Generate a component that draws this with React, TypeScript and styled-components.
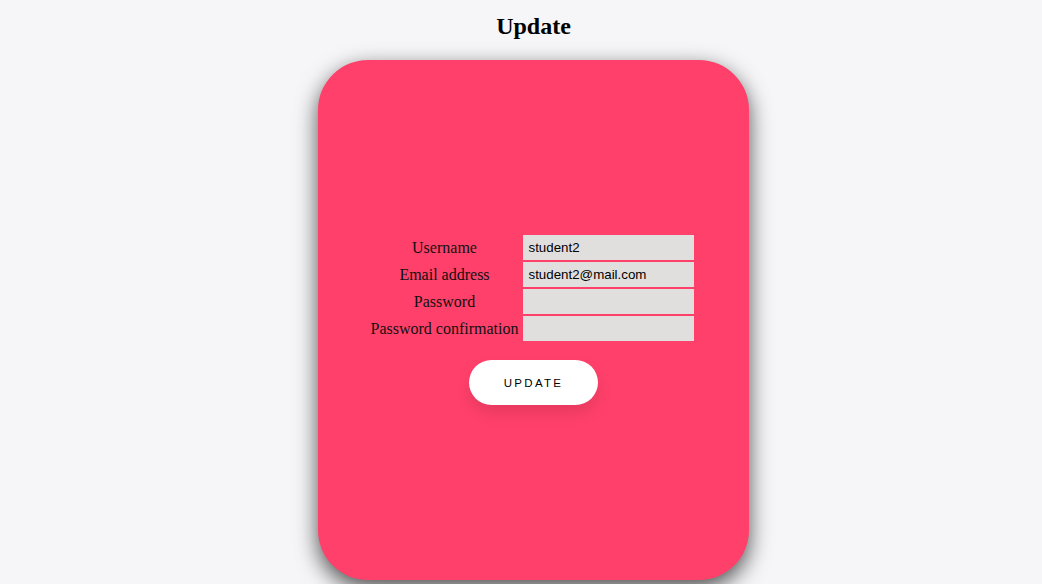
import React from "react";
import styled, { createGlobalStyle } from "styled-components";

const GlobalStyle = createGlobalStyle`
  html, body {
    margin: 0;
    background: #f6f5f7;
    font-family: "Liberation Serif", "Times New Roman", serif;
  }
`;

const Page = styled.div`
  display: flex;
  flex-direction: column;
  align-items: center;
  padding-left: 25px;
  min-height: 584px;
`;

const Title = styled.h2`
  font-size: 24px;
  font-weight: bold;
  margin: 13px 0 20px;
  color: #000;
`;

const Card = styled.div`
  width: 431px;
  height: 520px;
  flex-shrink: 0;
  background: #ff406a;
  border-radius: 50px;
  box-shadow: 0 8px 22px rgba(0, 0, 0, 0.68);
  display: flex;
  flex-direction: column;
  align-items: center;
  justify-content: center;
`;

const FormGrid = styled.div`
  display: grid;
  grid-template-columns: auto 171px;
  column-gap: 5px;
  row-gap: 2px;
  align-items: center;
  margin-right: 2px;
`;

const Label = styled.label`
  font-size: 16px;
  text-align: center;
  color: #111;
`;

const Field = styled.input`
  box-sizing: border-box;
  width: 171px;
  height: 25px;
  border: none;
  outline: none;
  padding: 0 5px;
  background: #e0dfde;
  font-family: "Liberation Sans", Arial, sans-serif;
  font-size: 13.33px;
  color: #000;
`;

const Button = styled.button`
  margin-top: 19px;
  width: 129px;
  height: 45px;
  border: none;
  border-radius: 45px;
  background: #fff;
  color: #000;
  font-family: "Liberation Sans", Arial, sans-serif;
  font-size: 11.5px;
  font-weight: 500;
  letter-spacing: 2.3px;
  text-transform: uppercase;
  box-shadow: 0 8px 15px rgba(0, 0, 0, 0.1);
  cursor: pointer;
`;

const fields = [
  { id: "username", label: "Username", type: "text", value: "student2" },
  { id: "email", label: "Email address", type: "email", value: "student2@mail.com" },
  { id: "password1", label: "Password", type: "password", value: "" },
  { id: "password2", label: "Password confirmation", type: "password", value: "" },
];

function App() {
  return (
    <>
      <GlobalStyle />
      <Page>
        <Title>Update</Title>
        <Card>
          <FormGrid>
            {fields.map((f) => (
              <React.Fragment key={f.id}>
                <Label htmlFor={f.id}>{f.label}</Label>
                <Field id={f.id} type={f.type} defaultValue={f.value} />
              </React.Fragment>
            ))}
          </FormGrid>
          <Button type="button">Update</Button>
        </Card>
      </Page>
    </>
  );
}

export default App;
